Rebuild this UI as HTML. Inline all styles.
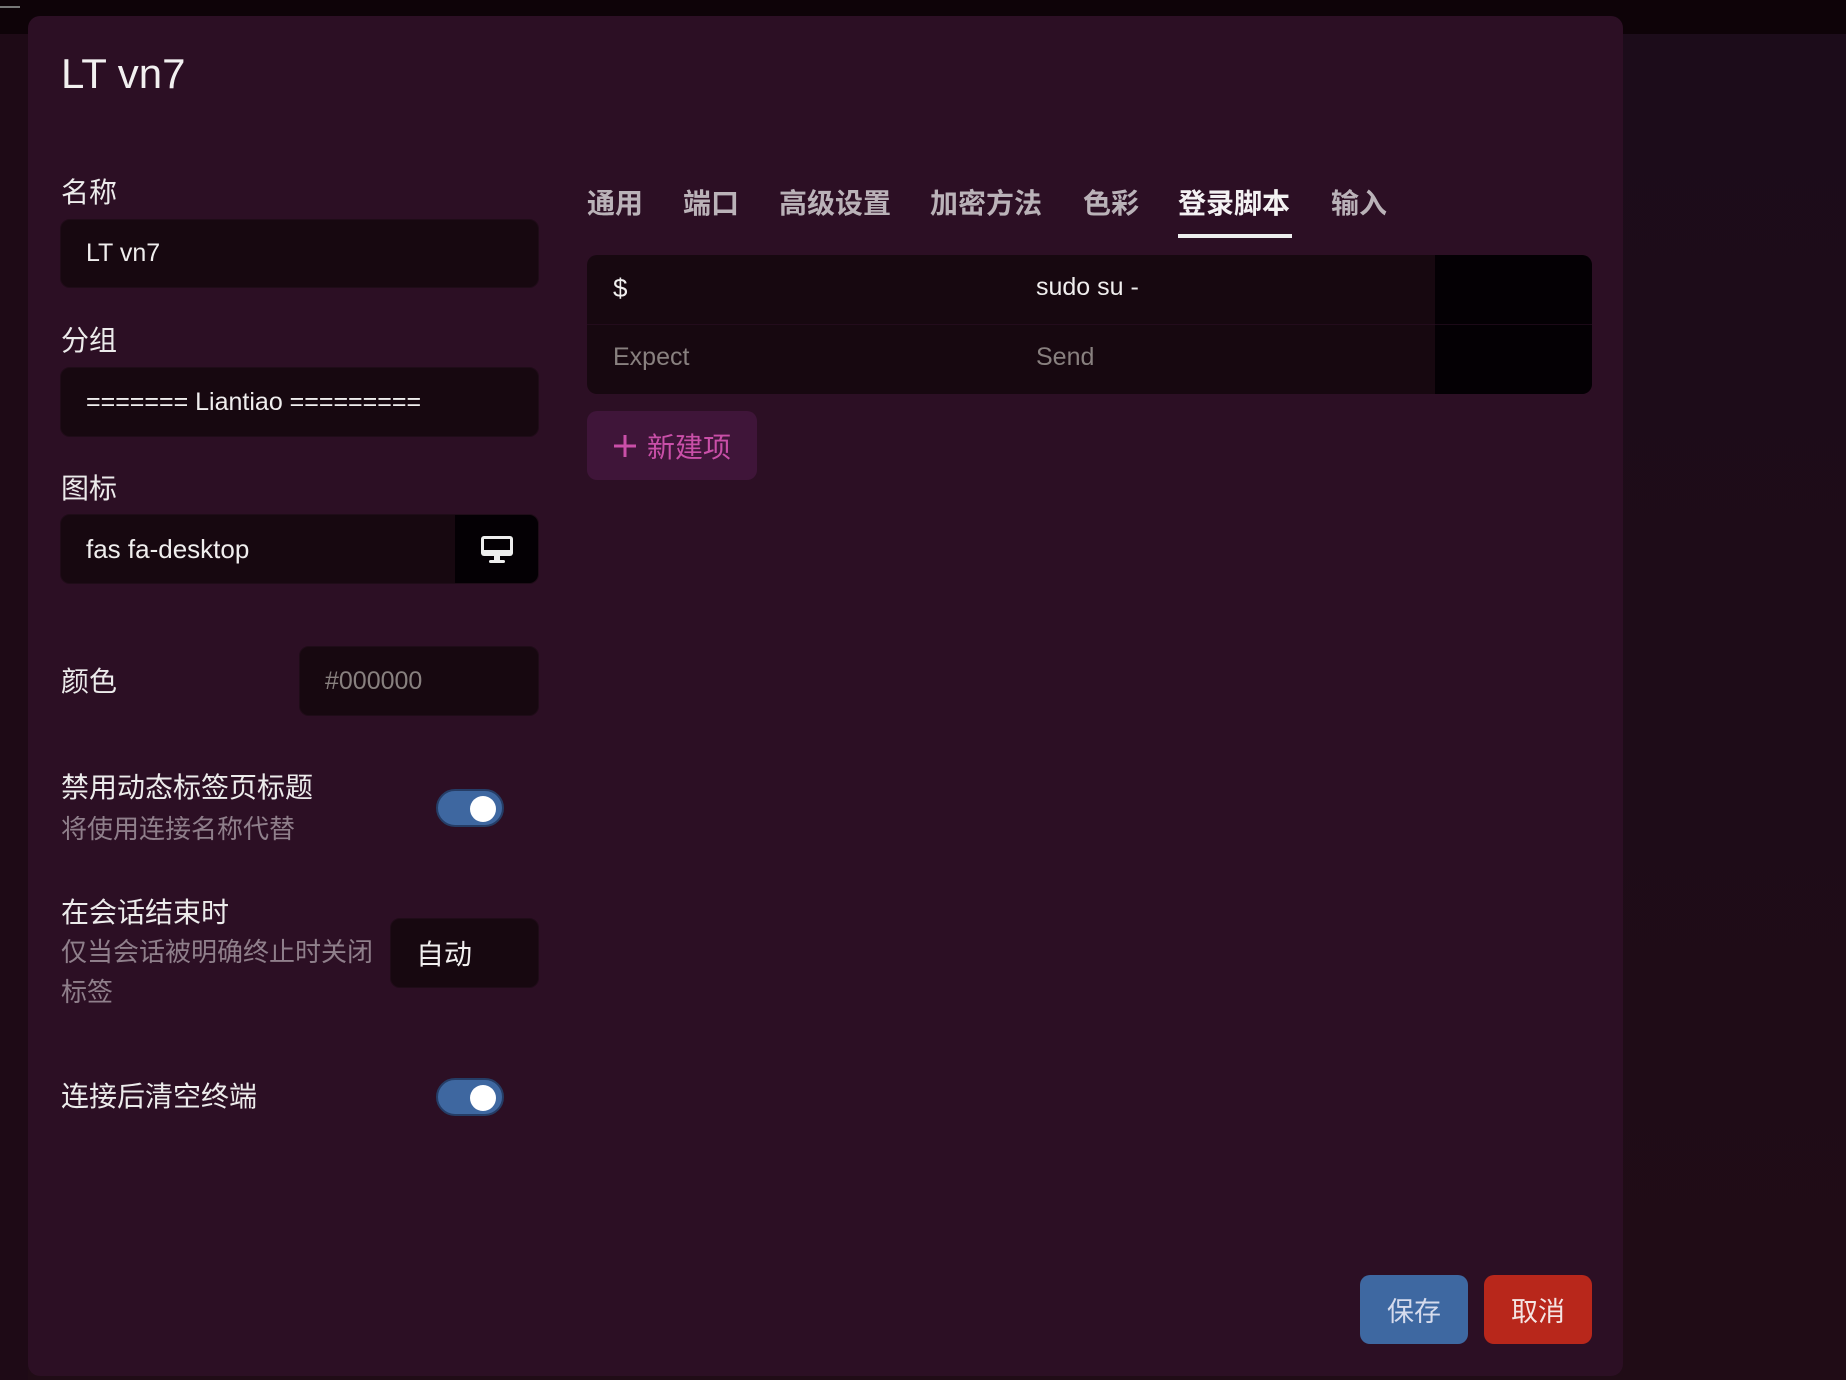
<!DOCTYPE html>
<html><head><meta charset="utf-8"><style>
*{box-sizing:border-box;margin:0;padding:0}
body{width:1846px;height:1380px;overflow:hidden;background:linear-gradient(180deg,#1c0c1a 0%,#200c16 100%);font-family:"Liberation Sans","Noto Sans CJK SC",sans-serif;position:relative;color:#eee}
.top{position:absolute;left:0;top:0;width:1846px;height:34px;background:#0e0308}
.left{position:absolute;left:0;top:34px;width:28px;height:1346px;background:#1e0a16}
.modal{position:absolute;left:28px;top:16px;width:1595px;height:1360px;background:#2c0f24;border-radius:12px}
.a{position:absolute}
.t{font-size:42px;color:#f2f0f0;left:61px;top:50px}
.lbl{font-size:28px;color:#ecebeb;left:61px}
.inp{position:absolute;background:#170810;border-radius:10px;border:1px solid #1f0c18;font-size:25px;color:#f0eeee;padding-left:25px;display:flex;align-items:center}
.sub{font-size:26px;color:#8f7f8b;left:61px}
.tgl{position:absolute;left:436px;width:68px;height:38px;border-radius:19px;background:#3e67a0;border:2px solid #253d66}
.tgl::after{content:"";position:absolute;right:6px;top:5px;width:26px;height:26px;border-radius:50%;background:#fff}
.tab{position:absolute;top:182px;font-size:28px;font-weight:bold;color:#bab2b8}
.btn{position:absolute;top:1275px;height:69px;width:108px;border-radius:10px;font-size:27px;display:flex;align-items:center;justify-content:center}
</style></head><body>
<div class="top"></div><div class="left"></div>
<div class="a" style="left:0;top:0;width:20px;height:8px;border-bottom:2px solid #777"></div>
<div class="modal"></div>
<div class="a t">LT vn7</div>
<div class="a lbl" style="top:171px">名称</div>
<div class="inp" style="left:60px;top:219px;width:479px;height:69px">LT vn7</div>
<div class="a lbl" style="top:319px">分组</div>
<div class="inp" style="left:60px;top:367px;width:479px;height:70px">======= Liantiao =========</div>
<div class="a lbl" style="top:467px">图标</div>
<div class="inp" style="left:60px;top:514px;width:479px;height:70px;overflow:hidden;font-size:26px">fas fa-desktop
 <div class="a" style="right:0;top:0;width:83px;height:70px;background:#040004;display:flex;align-items:center;justify-content:center">
 <svg width="34" height="30" viewBox="0 0 34 30"><rect x="1" y="1" width="32" height="20" rx="3" fill="#eee"/><rect x="4" y="4" width="26" height="11" fill="#040004"/><rect x="14" y="21" width="6" height="5" fill="#eee"/><rect x="9" y="25" width="16" height="3" rx="1.5" fill="#eee"/></svg></div></div>
<div class="a lbl" style="top:660px">颜色</div>
<div class="inp" style="left:299px;top:646px;width:240px;height:70px;color:#88807f">#000000</div>
<div class="a lbl" style="top:766px">禁用动态标签页标题</div>
<div class="a sub" style="top:809px">将使用连接名称代替</div>
<div class="tgl" style="top:789px"></div>
<div class="a lbl" style="top:891px">在会话结束时</div>
<div class="a sub" style="top:932px;line-height:40px">仅当会话被明确终止时关闭<br>标签</div>
<div class="inp" style="left:390px;top:918px;width:149px;height:70px;font-size:28px">自动</div>
<div class="a lbl" style="top:1075px">连接后清空终端</div>
<div class="tgl" style="top:1078px"></div>

<div class="tab" style="left:587px">通用</div>
<div class="tab" style="left:683px">端口</div>
<div class="tab" style="left:779px">高级设置</div>
<div class="tab" style="left:930px">加密方法</div>
<div class="tab" style="left:1083px">色彩</div>
<div class="tab" style="left:1178px;color:#f4f2f3">登录脚本</div>
<div class="tab" style="left:1331px">输入</div>
<div class="a" style="left:1178px;top:234px;width:114px;height:4px;background:#eee"></div>

<div class="a" style="left:587px;top:255px;width:1005px;height:139px;border-radius:10px;overflow:hidden;background:#170810">
 <div class="a" style="left:848px;top:0;width:157px;height:139px;background:#040004"></div>
 <div class="a" style="left:0;top:69px;width:1005px;height:1px;background:#2c0f24;opacity:.6"></div>
 <div class="a" style="left:26px;top:18px;font-size:26px;color:#f0eeee">$</div>
 <div class="a" style="left:449px;top:18px;font-size:25px;color:#f0eeee">sudo su -</div>
 <div class="a" style="left:26px;top:88px;font-size:25px;color:#88807f">Expect</div>
 <div class="a" style="left:449px;top:88px;font-size:25px;color:#88807f">Send</div>
</div>
<div class="a" style="left:587px;top:411px;width:170px;height:69px;border-radius:10px;background:#3f1539;color:#c94fa8;font-size:28px;display:flex;align-items:center;padding-left:26px">
<svg width="24" height="24" viewBox="0 0 24 24" style="margin-right:10px"><path d="M12 1V23M1 12H23" stroke="#c94fa8" stroke-width="3"/></svg>新建项</div>

<div class="btn" style="left:1360px;background:#3e68a1;color:#d6dced">保存</div>
<div class="btn" style="left:1484px;background:#b8271b;color:#f4e4e2">取消</div>
</body></html>
